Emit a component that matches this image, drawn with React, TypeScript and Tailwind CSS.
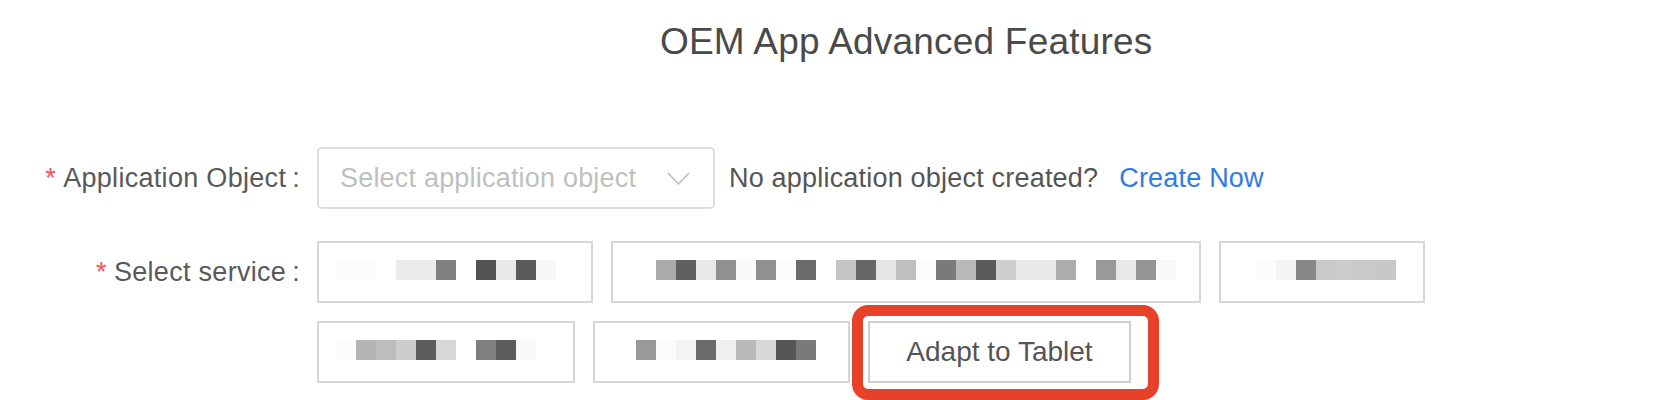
import React from 'react';

type Cell = string | null;

// pixelated (redacted) service names, 20px cells
const ROW_ONE: { width: number; offset: number; cells: Cell[] }[] = [
  {
    width: 276,
    offset: 17,
    cells: ['#fbfbfb', '#fbfbfb', null, '#ebebeb', '#ebebeb', '#808080', null, '#545454', '#e9e9e9', '#5a5a5a', '#f6f6f6']
  },
  {
    width: 590,
    offset: 43,
    cells: [
      '#aaaaaa', '#606060', '#e8e8e8', '#909090', '#fafafa', '#909090', '#fbfbfb', '#6b6b6b', null, '#c4c4c4',
      '#676767', '#e6e6e6', '#c0c0c0', '#fcfcfc', '#7a7a7a', '#b8b8b8', '#5a5a5a', '#cfcfcf', '#e8e8e8', '#e8e8e8',
      '#acacac', null, '#9a9a9a', '#e8e8e8', '#959595', '#f9f9f9'
    ]
  },
  {
    width: 206,
    offset: 35,
    cells: ['#fcfcfc', '#f5f5f5', '#888888', '#cacaca', '#cbcbcb', '#cacaca', '#c8c8c8']
  },
  {
    width: 258,
    offset: 17,
    cells: ['#fcfcfc', '#b5b5b5', '#bdbdbd', '#cdcdcd', '#5c5c5c', '#d7d7d7', null, '#7f7f7f', '#5c5c5c', '#fafafa']
  },
  {
    width: 257,
    offset: 41,
    cells: ['#999999', '#fcfcfc', '#f3f3f3', '#6a6a6a', '#f0f0f0', '#b9b9b9', '#d8d8d8', '#555555', '#7a7a7a']
  }
];

const ServiceBox: React.FC<{ width: number; offset: number; cells: Cell[] }> = ({ width, offset, cells }) => (
  <div
    className="h-[62px] border-2 border-[#d6d6d6] bg-white flex pt-[17px]"
    style={{ width, paddingLeft: offset }}
  >
    {cells.map((c, i) => (
      <div key={i} className="w-[20px] h-[20px] shrink-0" style={{ backgroundColor: c ?? 'transparent' }} />
    ))}
  </div>
);

const Label: React.FC<{ text: string }> = ({ text }) => (
  <div className="w-[300px] shrink-0 h-[62px] flex items-center justify-end text-[27px] tracking-[0.3px] text-[#595959]">
    <span className="text-[#f5515f] mr-[7px]">*</span>
    <span>{text}</span>
    <span className="ml-[6px]">:</span>
  </div>
);

export default function App() {
  return (
    <div
      className="relative h-[400px] w-full bg-white overflow-hidden"
      style={{ fontFamily: '"Liberation Sans", Arial, sans-serif' }}
    >
      {/* Title */}
      <div className="pt-[23px] pl-[660px]">
        <h1 className="text-[37px] leading-none font-normal tracking-[0.2px] text-[#4a4a4a] whitespace-nowrap">
          OEM App Advanced Features
        </h1>
      </div>

      {/* Form */}
      <div className="mt-[87px] flex flex-col gap-[32px]">
        <div className="flex items-center gap-[17px]">
          <Label text="Application Object" />
          <div className="w-[398px] h-[62px] border-2 border-[#dcdcdc] rounded-[5px] flex items-center justify-between pl-[21px] pr-[23px]">
            <span className="text-[27px] tracking-[0.2px] text-[#bfbfbf] whitespace-nowrap">Select application object</span>
            <svg width="23" height="13" viewBox="0 0 23 13" fill="none">
              <path d="M1 1 L11.5 12 L22 1" stroke="#bfbfbf" strokeWidth="1.6" />
            </svg>
          </div>
          <div className="flex items-center text-[27px] tracking-[0.2px] whitespace-nowrap -ml-[3px]">
            <span className="text-[#555555]">No application object created?</span>
            <span className="ml-[21px] text-[#2f7be6] cursor-pointer">Create Now</span>
          </div>
        </div>

        <div className="flex items-start gap-[17px]">
          <Label text="Select service" />
          <div className="w-[1180px] flex flex-wrap gap-[18px]">
            {ROW_ONE.map((b, i) => (
              <ServiceBox key={i} width={b.width} offset={b.offset} cells={b.cells} />
            ))}
            <button className="w-[263px] h-[62px] border-2 border-[#cfcfcf] bg-white text-[28px] text-[#555555] flex items-center justify-center">
              Adapt to Tablet
            </button>
          </div>
        </div>
      </div>

      {/* red annotation around the button */}
      <div className="absolute left-[852px] top-[305px] w-[307px] h-[95px] border-[11px] border-[#e8412a] rounded-[16px] pointer-events-none" />
    </div>
  );
}
